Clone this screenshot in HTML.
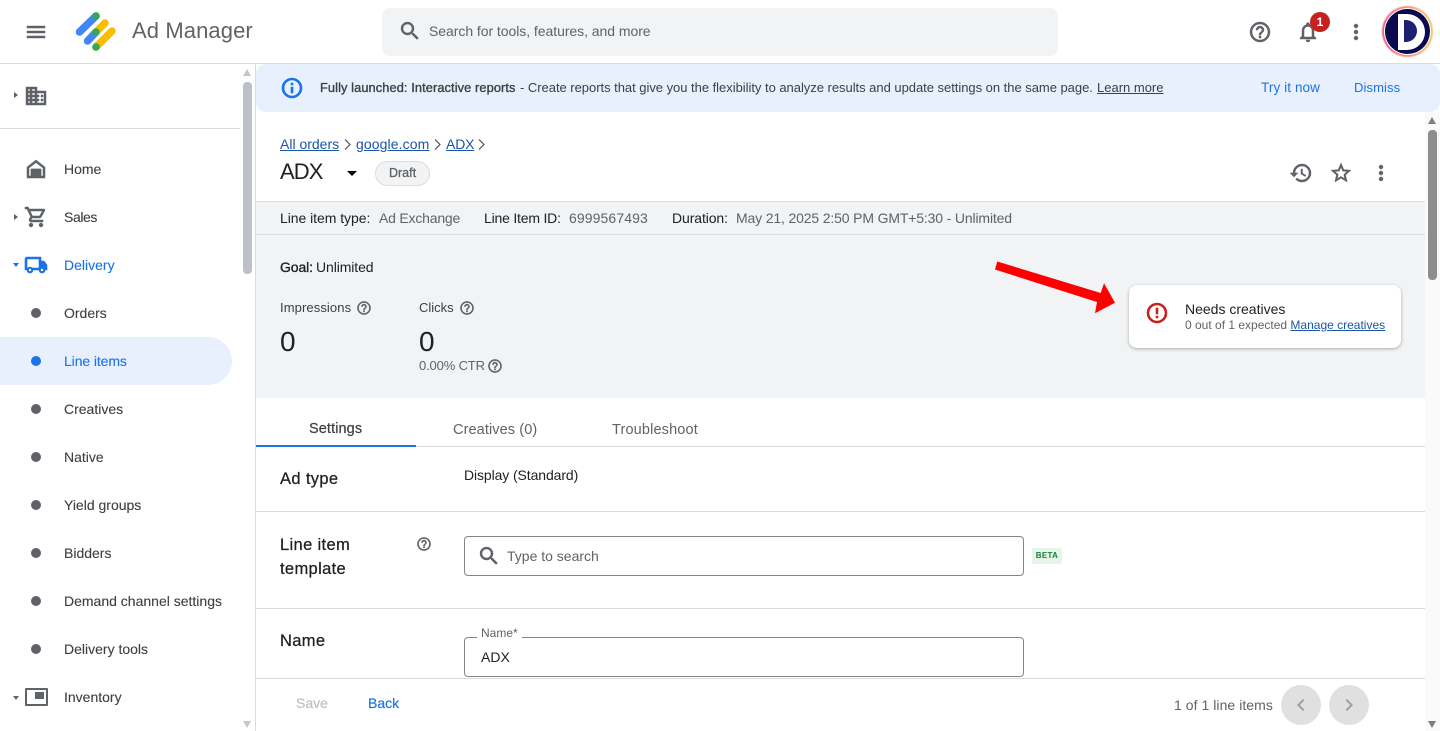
<!DOCTYPE html>
<html lang="en"><head><meta charset="utf-8"><title>Ad Manager</title>
<style>
*{box-sizing:border-box}
html,body{margin:0;padding:0;width:1440px;height:731px;overflow:hidden;background:#fff;font-family:"Liberation Sans",sans-serif;color:#3c4043}
.a{position:absolute}
.t{position:absolute;white-space:nowrap;font-size:14px;line-height:20px}
.nav{color:#3c4043;font-size:14px;-webkit-text-stroke:.1px}
.lab{font-size:16.500px;letter-spacing:.35px;color:#202124;-webkit-text-stroke:.25px}
.dot{position:absolute;left:31px;width:10px;height:10px;border-radius:50%;background:#5f6368}
.l{position:absolute;height:1px;background:#dadce0}
a{color:#1a56a8;text-decoration:underline}
svg{position:absolute;display:block}
.i path{stroke:#5f6368;stroke-width:.5}
.b path{stroke:#1a73e8;stroke-width:.6}
.r path{stroke:#c5221f;stroke-width:.6}
.c path{stroke:#5f6368;stroke-width:1.300}
</style></head><body>

<!-- header -->
<svg class="i" style="left:24px;top:20px" width="24" height="24" viewBox="0 0 24 24"><path fill="#5f6368" d="M3 18h18v-2H3v2zm0-5h18v-2H3v2zm0-7v2h18V6H3z"/></svg>
<svg style="left:74px;top:10px" width="44" height="44" viewBox="0 0 44 44">
<path d="M5.500 22 22 6" stroke="#4285f4" stroke-width="7.500" stroke-linecap="round"/>
<path d="M13.500 31 22 22" stroke="#4285f4" stroke-width="7.500" stroke-linecap="round"/>
<path d="M22 22 31 13" stroke="#fbbc04" stroke-width="7.500" stroke-linecap="round"/>
<path d="M22 37 38 21" stroke="#fbbc04" stroke-width="7.500" stroke-linecap="round"/>
<circle cx="22" cy="6" r="3.800" fill="#34a853"/><circle cx="22" cy="22" r="3.800" fill="#34a853"/><circle cx="22" cy="37" r="3.800" fill="#34a853"/></svg>
<div class="t" style="left:132px;top:17px;font-size:22px;line-height:28px;color:#5f6368;letter-spacing:.1px">Ad Manager</div>
<div class="a" style="left:382px;top:8px;width:676px;height:48px;background:#f1f3f4;border-radius:8px"></div>
<svg class="i" style="left:398px;top:19px" width="24" height="24" viewBox="0 0 24 24"><path fill="#5f6368" d="M15.500 14h-.79l-.28-.27A6.470 6.470 0 0 0 16 9.500 6.500 6.500 0 1 0 9.500 16c1.610 0 3.090-.59 4.230-1.570l.27.28v.79l5 4.990L20.490 19l-4.990-5zm-6 0C7.010 14 5 11.990 5 9.500S7.010 5 9.500 5 14 7.010 14 9.500 11.990 14 9.500 14z"/></svg>
<div class="t" style="left:429px;top:21px;color:#5f6368;letter-spacing:-.05px">Search for tools, features, and more</div>
<svg class="i" style="left:1248px;top:20px" width="24" height="24" viewBox="0 0 24 24"><path fill="#5f6368" d="M11 18h2v-2h-2v2zm1-16C6.480 2 2 6.480 2 12s4.480 10 10 10 10-4.480 10-10S17.520 2 12 2zm0 18c-4.410 0-8-3.590-8-8s3.590-8 8-8 8 3.590 8 8-3.590 8-8 8zm0-14c-2.210 0-4 1.790-4 4h2c0-1.100.9-2 2-2s2 .9 2 2c0 2-3 1.750-3 5h2c0-2.250 3-2.500 3-5 0-2.210-1.790-4-4-4z"/></svg>
<svg class="i" style="left:1296px;top:20px" width="24" height="24" viewBox="0 0 24 24"><path fill="#5f6368" d="M12 22c1.100 0 2-.9 2-2h-4c0 1.100.9 2 2 2zm6-6v-5c0-3.070-1.630-5.640-4.500-6.320V4c0-.83-.67-1.500-1.500-1.500s-1.500.67-1.500 1.500v.68C7.640 5.360 6 7.920 6 11v5l-2 2v1h16v-1l-2-2zm-2 1H8v-6c0-2.480 1.510-4.500 4-4.500s4 2.020 4 4.500v6z"/></svg>
<div class="a" style="left:1310px;top:12px;width:20px;height:20px;border-radius:50%;background:#c5221f;color:#fff;font-size:12px;font-weight:bold;line-height:20px;text-align:center">1</div>
<svg class="i" style="left:1344px;top:20px" width="24" height="24" viewBox="0 0 24 24"><path fill="#5f6368" d="M12 8c1.100 0 2-.9 2-2s-.9-2-2-2-2 .9-2 2 .9 2 2 2zm0 2c-1.100 0-2 .9-2 2s.9 2 2 2 2-.9 2-2-.9-2-2-2zm0 6c-1.100 0-2 .9-2 2s.9 2 2 2 2-.9 2-2-.9-2-2-2z"/></svg>
<div class="a" style="left:1382px;top:6px;width:51px;height:51px;border-radius:50%;background:linear-gradient(90deg,#ea5f86,#f6a07a 60%,#f6c667);filter:blur(.6px)"></div>
<div class="a" style="left:1384px;top:8px;width:47px;height:47px;border-radius:50%;background:#fff"></div>
<div class="a" style="left:1385px;top:9px;width:45px;height:45px;border-radius:50%;background:#0c0a4e"></div>
<div class="a" style="left:1398px;top:14px;width:27px;height:36px;background:#fff;border-radius:0 18px 18px 0"></div>
<div class="a" style="left:1404px;top:20px;width:13px;height:22px;background:#1e2170;border-radius:0 11px 11px 0"></div>
<div class="l" style="left:0;top:63px;width:1440px"></div>

<!-- sidebar -->
<div class="a" style="left:13.500px;top:92px;border-left:4px solid #5f6368;border-top:3.500px solid transparent;border-bottom:3.500px solid transparent"></div>
<svg class="i" style="left:24px;top:84px" width="24" height="24" viewBox="0 0 24 24"><path fill="#5f6368" d="M2 3h11v4h9v14H2V3zm2 2v2h2V5H4zm4 0v2h3V5H8zM4 9v2h2V9H4zm4 0v2h3V9H8zm-4 4v2h2v-2H4zm4 0v2h3v-2H8zm-4 4v2h2v-2H4zm4 0v2h3v-2H8zm5-8v2h2v2h-2v2h2v2h-2v2h7V9h-7zm4 2h2v2h-2v-2zm0 4h2v2h-2v-2z"/></svg>
<div class="l" style="left:0;top:128px;width:240px"></div>

<svg class="i" style="left:24px;top:157px" width="24" height="24" viewBox="0 0 24 24"><path fill="#5f6368" d="M12 3 3 10v11h18V10l-9-7zm7 16h-2v-7H7v7H5v-8l7-5.400 7 5.400v8z"/><path fill="#5f6368" d="M7 12h10v8H7z"/></svg>
<div class="t nav" style="left:64px;top:159px">Home</div>
<div class="a" style="left:13.500px;top:213.500px;border-left:4px solid #5f6368;border-top:3.500px solid transparent;border-bottom:3.500px solid transparent"></div>
<svg class="i" style="left:24px;top:205px" width="24" height="24" viewBox="0 0 24 24"><path fill="#5f6368" d="M15.550 13c.75 0 1.410-.41 1.750-1.030l3.580-6.490A.996.996 0 0 0 20.010 4H5.210l-.94-2H1v2h2l3.600 7.590-1.350 2.440C4.520 15.370 5.480 17 7 17h12v-2H7l1.100-2h7.450zM6.160 6h12.150l-2.760 5H8.530L6.160 6zM7 18c-1.100 0-1.990.9-1.990 2S5.900 22 7 22s2-.9 2-2-.9-2-2-2zm10 0c-1.100 0-1.990.9-1.990 2s.89 2 1.990 2 2-.9 2-2-.9-2-2-2z"/></svg>
<div class="t nav" style="left:64px;top:207px;letter-spacing:-.4px">Sales</div>
<div class="a" style="left:12.500px;top:263px;border-top:4px solid #1a73e8;border-left:3.500px solid transparent;border-right:3.500px solid transparent"></div>
<svg class="b" style="left:24px;top:253px" width="24" height="24" viewBox="0 0 24 24"><path fill="#1a73e8" d="M20 8h-3V4H3c-1.100 0-2 .9-2 2v11h2c0 1.660 1.340 3 3 3s3-1.340 3-3h6c0 1.660 1.340 3 3 3s3-1.340 3-3h2v-5l-3-4zM6 18.500c-.83 0-1.500-.67-1.500-1.500s.67-1.500 1.500-1.500 1.500.67 1.500 1.500-.67 1.500-1.500 1.500zM15 15H8.200c-.55-.61-1.330-1-2.200-1s-1.650.39-2.200 1H3V6h12v9zm3 3.500c-.83 0-1.500-.67-1.500-1.500s.67-1.500 1.500-1.500 1.500.67 1.500 1.500-.67 1.500-1.500 1.500z"/></svg>
<div class="t nav" style="left:64px;top:255px;color:#1a73e8">Delivery</div>
<div class="dot" style="top:308px"></div><div class="t nav" style="left:64px;top:303px">Orders</div>
<div class="a" style="left:0;top:337px;width:232px;height:48px;background:#e8f0fe;border-radius:0 24px 24px 0"></div>
<div class="dot" style="top:356px;background:#1a73e8"></div><div class="t nav" style="left:64px;top:351px;color:#1a73e8;letter-spacing:-.1px">Line items</div>
<div class="dot" style="top:404px"></div><div class="t nav" style="left:64px;top:399px">Creatives</div>
<div class="dot" style="top:452px"></div><div class="t nav" style="left:64px;top:447px">Native</div>
<div class="dot" style="top:500px"></div><div class="t nav" style="left:64px;top:495px">Yield groups</div>
<div class="dot" style="top:548px"></div><div class="t nav" style="left:64px;top:543px">Bidders</div>
<div class="dot" style="top:596px"></div><div class="t nav" style="left:64px;top:591px">Demand channel settings</div>
<div class="dot" style="top:644px"></div><div class="t nav" style="left:64px;top:639px">Delivery tools</div>
<div class="a" style="left:12.500px;top:696px;border-top:4px solid #5f6368;border-left:3.500px solid transparent;border-right:3.500px solid transparent"></div>
<div class="a" style="left:25px;top:688px;width:23px;height:18px;border:2.500px solid #5f6368;border-radius:1px"></div>
<div class="a" style="left:35px;top:692px;width:9px;height:7px;background:#5f6368"></div>
<div class="t nav" style="left:64px;top:687px">Inventory</div>

<!-- sidebar scrollbar -->
<div class="a" style="left:243px;top:69px;border-bottom:7px solid #c4c6ca;border-left:4.500px solid transparent;border-right:4.500px solid transparent"></div>
<div class="a" style="left:243px;top:82px;width:9px;height:192px;background:#bdc1c6;border-radius:4px"></div>
<div class="a" style="left:243px;top:721px;border-top:7px solid #c4c6ca;border-left:4.500px solid transparent;border-right:4.500px solid transparent"></div>
<div class="a" style="left:255px;top:64px;width:1px;height:667px;background:#dadce0"></div>

<!-- main scrollbar -->
<div class="a" style="left:1425px;top:112px;width:15px;height:619px;background:#fafafa"></div>
<div class="a" style="left:1428px;top:117px;border-bottom:7px solid #7f7f7f;border-left:4.500px solid transparent;border-right:4.500px solid transparent"></div>
<div class="a" style="left:1428px;top:130px;width:9px;height:150px;background:#8e8e8e;border-radius:4px"></div>
<div class="a" style="left:1428px;top:721px;border-top:7px solid #7f7f7f;border-left:4.500px solid transparent;border-right:4.500px solid transparent"></div>

<!-- banner -->
<div class="a" style="left:256px;top:64px;width:1184px;height:48px;background:#e8f0fe;border-radius:10px"></div>
<svg class="b" style="left:280px;top:76px" width="24" height="24" viewBox="0 0 24 24"><path fill="#1a73e8" d="M11 7h2v2h-2zm0 4h2v6h-2zm1-9C6.480 2 2 6.480 2 12s4.480 10 10 10 10-4.480 10-10S17.520 2 12 2zm0 18c-4.410 0-8-3.590-8-8s3.590-8 8-8 8 3.590 8 8-3.590 8-8 8z"/></svg>
<div class="t" style="left:320px;top:78px;font-size:12.800px;color:#3c4043;letter-spacing:.1px;-webkit-text-stroke:.35px">Fully launched: Interactive reports</div>
<div class="t" style="left:520px;top:78px;font-size:13px;color:#3c4043;letter-spacing:-.03px">- Create reports that give you the flexibility to analyze results and update settings on the same page.</div>
<div class="t" style="left:1097px;top:78px;font-size:13px;color:#3c4043"><a href="#" style="color:#3c4043">Learn more</a></div>
<div class="t" style="left:1261px;top:78px;font-size:13.500px;color:#1a73e8;letter-spacing:.1px">Try it now</div>
<div class="t" style="left:1354px;top:78px;font-size:13px;color:#1a73e8;letter-spacing:.1px">Dismiss</div>

<!-- title -->
<div class="t" style="left:280px;top:134px"><a href="#">All orders</a></div>
<div class="t" style="left:356px;top:134px;letter-spacing:.1px"><a href="#">google.com</a></div>
<div class="t" style="left:446px;top:134px;letter-spacing:-.15px"><a href="#">ADX</a></div>
<svg class="c" style="left:343px;top:138px" width="9" height="13" viewBox="0 0 9 13"><path d="M2 1.500 7 6.500 2 11.500" fill="none"/></svg>
<svg class="c" style="left:433px;top:138px" width="9" height="13" viewBox="0 0 9 13"><path d="M2 1.500 7 6.500 2 11.500" fill="none"/></svg>
<svg class="c" style="left:477px;top:138px" width="9" height="13" viewBox="0 0 9 13"><path d="M2 1.500 7 6.500 2 11.500" fill="none"/></svg>
<div class="t" style="left:280px;top:158px;font-size:22px;line-height:28px;color:#202124;letter-spacing:-.9px">ADX</div>
<div class="a" style="left:347px;top:171px;border-top:5px solid #000;border-left:5px solid transparent;border-right:5px solid transparent"></div>
<div class="a" style="left:375px;top:161px;width:55px;height:25px;border:1px solid #dadce0;border-radius:13px;background:#f1f3f4;color:#5f6368;font-size:12.500px;line-height:23px;text-align:center;-webkit-text-stroke:.3px">Draft</div>
<svg class="i" style="left:1289px;top:161px" width="24" height="24" viewBox="0 0 24 24"><path fill="#5f6368" d="M13 3a9 9 0 0 0-9 9H1l3.890 3.890.07.14L9 12H6c0-3.870 3.130-7 7-7s7 3.130 7 7-3.130 7-7 7c-1.930 0-3.680-.79-4.940-2.060l-1.420 1.420A8.954 8.954 0 0 0 13 21a9 9 0 0 0 0-18zm-1 5v5l4.280 2.540.72-1.210-3.500-2.080V8H12z"/></svg>
<svg class="i" style="left:1329px;top:161px" width="24" height="24" viewBox="0 0 24 24"><path fill="#5f6368" d="m22 9.240-7.190-.62L12 2 9.190 8.630 2 9.240l5.460 4.730L5.820 21 12 17.270 18.180 21l-1.630-7.030L22 9.240zM12 15.400l-3.760 2.270 1-4.280-3.320-2.880 4.380-.38L12 6.100l1.710 4.040 4.380.38-3.320 2.880 1 4.280L12 15.400z"/></svg>
<svg class="i" style="left:1369px;top:161px" width="24" height="24" viewBox="0 0 24 24"><path fill="#5f6368" d="M12 8c1.100 0 2-.9 2-2s-.9-2-2-2-2 .9-2 2 .9 2 2 2zm0 2c-1.100 0-2 .9-2 2s.9 2 2 2 2-.9 2-2-.9-2-2-2zm0 6c-1.100 0-2 .9-2 2s.9 2 2 2 2-.9 2-2-.9-2-2-2z"/></svg>

<!-- grey summary -->
<div class="a" style="left:256px;top:201px;width:1169px;height:197px;background:#f1f3f4"></div>
<div class="l" style="left:256px;top:201px;width:1169px"></div>
<div class="l" style="left:256px;top:234px;width:1169px"></div>
<div class="t" style="left:280px;top:208px;color:#202124;letter-spacing:-.05px">Line item type:</div>
<div class="t" style="left:379px;top:208px;color:#5f6368;letter-spacing:-.2px">Ad Exchange</div>
<div class="t" style="left:484px;top:208px;color:#202124;letter-spacing:-.2px">Line Item ID:</div>
<div class="t" style="left:569px;top:208px;color:#5f6368;letter-spacing:.1px">6999567493</div>
<div class="t" style="left:672px;top:208px;color:#202124;letter-spacing:-.1px">Duration:</div>
<div class="t" style="left:736px;top:208px;color:#5f6368;letter-spacing:-.15px">May 21, 2025 2:50 PM GMT+5:30 - Unlimited</div>
<div class="t" style="left:280px;top:257px;color:#202124;letter-spacing:-.1px;-webkit-text-stroke:.35px">Goal:</div>
<div class="t" style="left:316px;top:257px;color:#202124;letter-spacing:-.1px">Unlimited</div>
<div class="t" style="left:280px;top:298px;font-size:13px;color:#3c4043;letter-spacing:.1px">Impressions</div>
<svg class="i" style="left:356px;top:300px" width="16" height="16" viewBox="0 0 24 24"><path fill="#5f6368" d="M11 18h2v-2h-2v2zm1-16C6.480 2 2 6.480 2 12s4.480 10 10 10 10-4.480 10-10S17.520 2 12 2zm0 18c-4.410 0-8-3.590-8-8s3.590-8 8-8 8 3.590 8 8-3.590 8-8 8zm0-14c-2.210 0-4 1.790-4 4h2c0-1.100.9-2 2-2s2 .9 2 2c0 2-3 1.750-3 5h2c0-2.250 3-2.500 3-5 0-2.210-1.790-4-4-4z"/></svg>
<div class="t" style="left:419px;top:298px;font-size:13px;color:#3c4043">Clicks</div>
<svg class="i" style="left:459px;top:300px" width="16" height="16" viewBox="0 0 24 24"><path fill="#5f6368" d="M11 18h2v-2h-2v2zm1-16C6.480 2 2 6.480 2 12s4.480 10 10 10 10-4.480 10-10S17.520 2 12 2zm0 18c-4.410 0-8-3.590-8-8s3.590-8 8-8 8 3.590 8 8-3.590 8-8 8zm0-14c-2.210 0-4 1.790-4 4h2c0-1.100.9-2 2-2s2 .9 2 2c0 2-3 1.750-3 5h2c0-2.250 3-2.500 3-5 0-2.210-1.790-4-4-4z"/></svg>
<div class="t" style="left:280px;top:326px;font-size:28px;line-height:32px;color:#202124">0</div>
<div class="t" style="left:419px;top:326px;font-size:28px;line-height:32px;color:#202124">0</div>
<div class="t" style="left:419px;top:356px;font-size:13px;color:#5f6368;letter-spacing:-.15px">0.00% CTR</div>
<svg class="i" style="left:487px;top:358px" width="16" height="16" viewBox="0 0 24 24"><path fill="#5f6368" d="M11 18h2v-2h-2v2zm1-16C6.480 2 2 6.480 2 12s4.480 10 10 10 10-4.480 10-10S17.520 2 12 2zm0 18c-4.410 0-8-3.590-8-8s3.590-8 8-8 8 3.590 8 8-3.590 8-8 8zm0-14c-2.210 0-4 1.790-4 4h2c0-1.100.9-2 2-2s2 .9 2 2c0 2-3 1.750-3 5h2c0-2.250 3-2.500 3-5 0-2.210-1.790-4-4-4z"/></svg>

<!-- arrow -->
<svg style="left:990px;top:255px" width="130" height="65" viewBox="0 0 130 65"><path fill="#ff0000" d="M7.300 6.500 5 14.500 107 47 105 58.300 125 47.700 114 28.300 110.700 38 Z"/></svg>

<!-- card -->
<div class="a" style="left:1129px;top:285px;width:272px;height:63px;background:#fff;border-radius:8px;box-shadow:0 1px 3px rgba(60,64,67,.4)"></div>
<svg class="r" style="left:1145px;top:301px" width="24" height="24" viewBox="0 0 24 24"><path fill="#c5221f" d="M11 15h2v2h-2zm0-8h2v6h-2zm1-5C6.470 2 2 6.480 2 12s4.470 10 10 10c5.520 0 10-4.480 10-10S17.520 2 12 2zm0 18c-4.420 0-8-3.580-8-8s3.580-8 8-8 8 3.580 8 8-3.580 8-8 8z"/></svg>
<div class="t" style="left:1185px;top:299px;color:#202124">Needs creatives</div>
<div class="t" style="left:1185px;top:315px;font-size:12px;color:#5f6368">0 out of 1 expected <a href="#">Manage creatives</a></div>

<!-- tabs -->
<div class="t" style="left:309px;top:419px;color:#3c4043;font-size:14.500px;letter-spacing:.1px;-webkit-text-stroke:.2px">Settings</div>
<div class="t" style="left:453px;top:420px;color:#5f6368;font-size:14.500px;letter-spacing:.1px">Creatives (0)</div>
<div class="t" style="left:612px;top:420px;color:#5f6368;font-size:14.500px;letter-spacing:.15px">Troubleshoot</div>
<div class="l" style="left:256px;top:446px;width:1169px"></div>
<div class="a" style="left:256px;top:445px;width:160px;height:2px;background:#1a73e8"></div>

<!-- form -->
<div class="t lab" style="left:280px;top:469px">Ad type</div>
<div class="t" style="left:464px;top:465px;color:#202124;letter-spacing:-.1px">Display (Standard)</div>
<div class="l" style="left:256px;top:511px;width:1169px"></div>
<div class="t lab" style="left:280px;top:533px;line-height:24px">Line item<br>template</div>
<svg class="i" style="left:416px;top:536px" width="16" height="16" viewBox="0 0 24 24"><path fill="#5f6368" d="M11 18h2v-2h-2v2zm1-16C6.480 2 2 6.480 2 12s4.480 10 10 10 10-4.480 10-10S17.520 2 12 2zm0 18c-4.410 0-8-3.590-8-8s3.590-8 8-8 8 3.590 8 8-3.590 8-8 8zm0-14c-2.210 0-4 1.790-4 4h2c0-1.100.9-2 2-2s2 .9 2 2c0 2-3 1.750-3 5h2c0-2.250 3-2.500 3-5 0-2.210-1.790-4-4-4z"/></svg>
<div class="a" style="left:464px;top:536px;width:560px;height:40px;border:1px solid #80868b;border-radius:4px"></div>
<svg class="i" style="left:477px;top:544px" width="24" height="24" viewBox="0 0 24 24"><path fill="#5f6368" d="M15.500 14h-.79l-.28-.27A6.470 6.470 0 0 0 16 9.500 6.500 6.500 0 1 0 9.500 16c1.610 0 3.090-.59 4.230-1.570l.27.28v.79l5 4.990L20.490 19l-4.990-5zm-6 0C7.010 14 5 11.990 5 9.500S7.010 5 9.500 5 14 7.010 14 9.500 11.990 14 9.500 14z"/></svg>
<div class="t" style="left:507px;top:546px;color:#5f6368">Type to search</div>
<div class="a" style="left:1032px;top:548px;width:30px;height:16px;background:#e6f4ea;border-radius:2px;color:#188038;font-size:8px;font-weight:bold;line-height:16px;text-align:center;letter-spacing:.3px">BETA</div>
<div class="l" style="left:256px;top:608px;width:1169px"></div>
<div class="t lab" style="left:280px;top:631px">Name</div>
<div class="a" style="left:464px;top:637px;width:560px;height:40px;border:1px solid #80868b;border-radius:4px"></div>
<div class="t" style="left:477px;top:624px;padding:0 4px;background:#fff;font-size:12px;color:#5f6368;line-height:18px;height:16px">Name*</div>
<div class="t" style="left:481px;top:647px;color:#202124">ADX</div>

<!-- footer -->
<div class="a" style="left:256px;top:678px;width:1169px;height:53px;background:#fff;border-top:1px solid #dadce0"></div>
<div class="t" style="left:296px;top:693px;color:#bdc1c6;-webkit-text-stroke:.2px">Save</div>
<div class="t" style="left:368px;top:693px;color:#1a73e8;-webkit-text-stroke:.2px">Back</div>
<div class="t" style="left:1174px;top:695px;color:#5f6368;letter-spacing:.05px">1 of 1 line items</div>
<div class="a" style="left:1281px;top:685px;width:40px;height:40px;border-radius:50%;background:#e0e0e0"></div>
<div class="a" style="left:1329px;top:685px;width:40px;height:40px;border-radius:50%;background:#e0e0e0"></div>
<svg style="left:1289px;top:693px" width="24" height="24" viewBox="0 0 24 24"><path fill="#9aa0a6" d="M15.410 7.410 14 6l-6 6 6 6 1.410-1.410L10.830 12z"/></svg>
<svg style="left:1337px;top:693px" width="24" height="24" viewBox="0 0 24 24"><path fill="#9aa0a6" d="M10 6 8.590 7.410 13.170 12l-4.580 4.590L10 18l6-6z"/></svg>
</body></html>
